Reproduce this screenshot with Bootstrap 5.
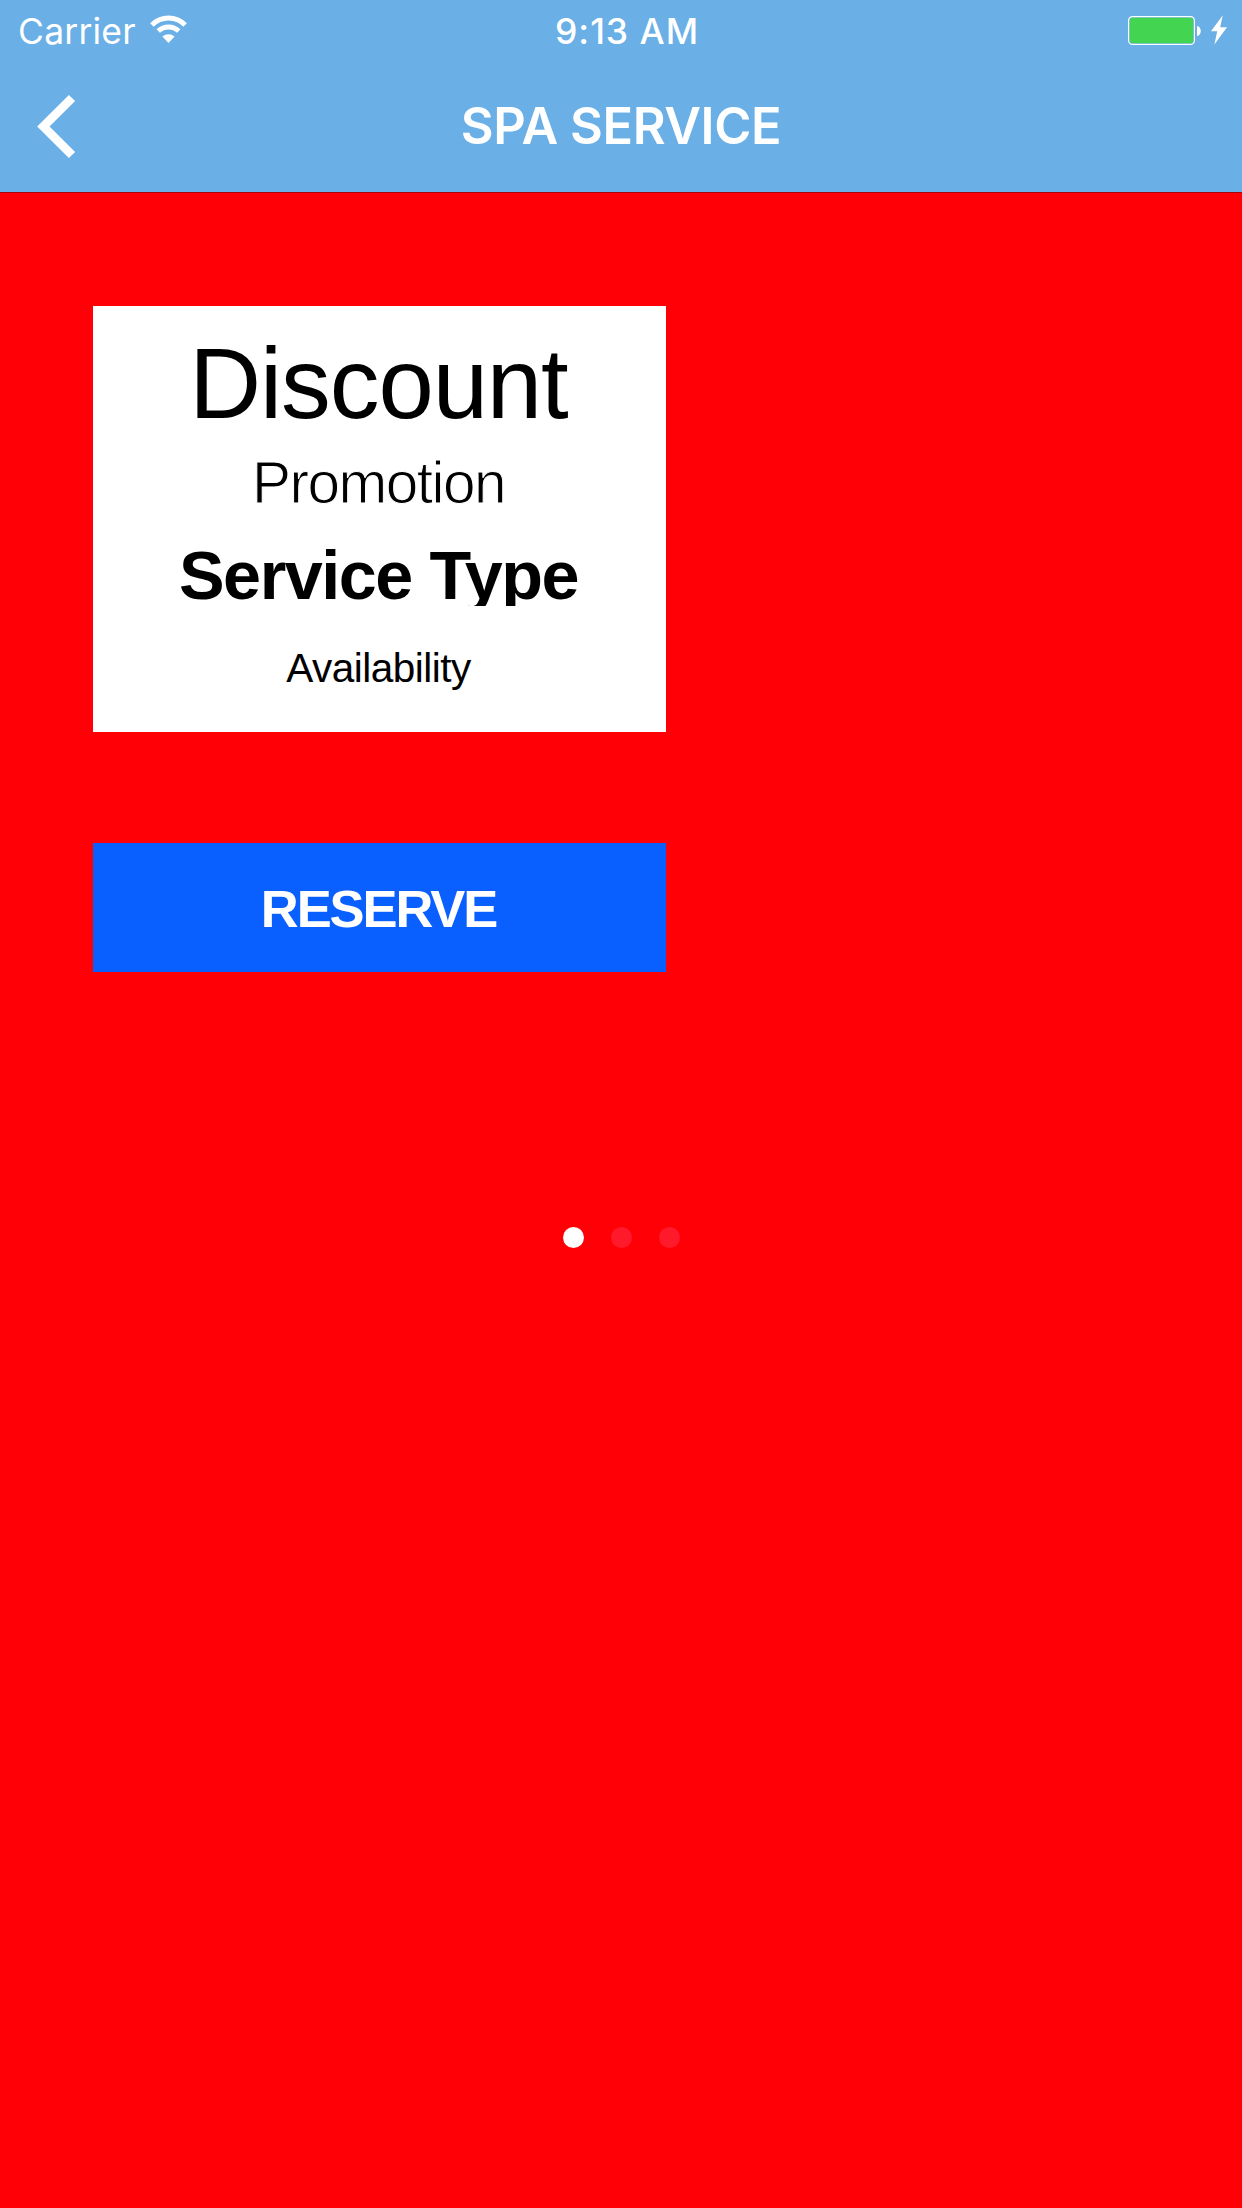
<!DOCTYPE html>
<html lang="en">
<head>
<meta charset="utf-8">
<meta name="viewport" content="width=device-width, initial-scale=1">
<title>Spa Service</title>
<link href="https://cdn.jsdelivr.net/npm/bootstrap@5.3.0/dist/css/bootstrap.min.css" rel="stylesheet">
<style>
body{background:#ff0006;font-family:"Liberation Sans",Arial,sans-serif;width:1242px;height:2208px;overflow:hidden}
.app-header{background:#6aafe6;height:193px;border-bottom:1px solid #a8060c;font-family:Inter,sans-serif;color:#fff}
.status-bar{height:60px;font-size:35.5px;line-height:60px}
.status-left{width:555px;padding-left:18px}
.carrier{width:117px;font-weight:400;letter-spacing:.2px;padding-top:2px}
.clock{font-weight:500;letter-spacing:1px;padding-top:2px}
.wifi{margin-left:14px}
.title-bar{height:132px;grid-template-columns:200px 1fr 200px}
.title-text{font-size:50.5px;line-height:132px;font-weight:600;letter-spacing:-.4px}
.back{padding-left:35px}
.offer-area{padding:113px 0 0 93px}
.offer{width:573px;height:426px;padding:27px 2px 0 0;color:#000}
.l-discount{font-size:99.5px;line-height:102px;height:100px;letter-spacing:-1.1px}
.l-promotion{font-size:58.5px;line-height:62px;height:60px;letter-spacing:-1.5px;margin-top:19px;-webkit-text-stroke:1px #fff}
.l-service{font-size:68.3px;line-height:71px;height:66px;letter-spacing:-1.45px;margin-top:28px}
.l-avail{font-size:40.5px;line-height:47px;letter-spacing:-.5px;margin-top:39px}
.btn-reserve{--bs-btn-bg:#0a60ff;--bs-btn-color:#fff;--bs-btn-hover-bg:#0a60ff;--bs-btn-hover-color:#fff;width:573px;height:129px;margin-top:111px;padding:2px 2px 0 0;font-size:52.5px;line-height:127px;letter-spacing:-2.1px}
.pager{gap:27px;margin-top:255px}
.dot{width:21px;height:21px;background:#ff1a2b}
.dot.on{background:#fff}
</style>
<script src="https://cdn.jsdelivr.net/npm/bootstrap@5.3.0/dist/js/bootstrap.bundle.min.js"></script>
</head>
<body>
<header class="app-header">
  <div class="status-bar d-flex">
    <div class="status-left d-flex">
      <span class="carrier">Carrier</span>
      <svg class="wifi" width="40" height="60" viewBox="0 0 40 60" fill="none" stroke="#fff" stroke-width="5">
        <path d="M2.900 25.100a23.200 23.200 0 0 1 33.200 0M9.200 31a15.200 15.200 0 0 1 20.600 0"/>
        <path d="M13.400 36.600a9.400 9.400 0 0 1 12.200 0L19.500 43z" fill="#fff" stroke="none"/>
      </svg>
    </div>
    <span class="clock">9:13 AM</span>
    <svg class="ms-auto" width="114" height="60" viewBox="1128 0 114 60">
      <rect x="1128.600" y="16.600" width="65.800" height="27.800" rx="4" fill="none" stroke="#fff" stroke-width="1.200"/>
      <rect x="1129.800" y="17.800" width="63.400" height="25.400" rx="3" fill="#43d551"/>
      <path d="M1197 26c5 .5 5 9.500 0 10z" fill="#fff"/>
      <path d="M1222.800 15.200L1211 31.300h6.200L1214.400 44.600L1227 27.300h-6.800z" fill="#fff"/>
    </svg>
  </div>
  <nav class="title-bar d-grid" aria-label="Title">
    <a class="back d-flex" href="#" aria-label="Back">
      <svg width="42" height="132" viewBox="0 0 42 132" fill="none" stroke="#fff" stroke-width="8.800"><path d="M37 38L8.400 66.500L37 95"/></svg>
    </a>
    <div class="title-text text-center text-nowrap">SPA SERVICE</div>
  </nav>
</header>
<main>
  <section class="offer-area">
    <div class="offer bg-white text-center text-nowrap">
      <div class="l-discount">Discount</div>
      <div class="l-promotion">Promotion</div>
      <div class="l-service fw-bold overflow-hidden">Service Type</div>
      <div class="l-avail">Availability</div>
    </div>
    <button type="button" class="btn btn-reserve d-block border-0 rounded-0 fw-bold">RESERVE</button>
  </section>
  <div class="pager d-flex justify-content-center">
    <span class="dot on rounded-circle"></span>
    <span class="dot rounded-circle"></span>
    <span class="dot rounded-circle"></span>
  </div>
</main>
</body>
</html>
